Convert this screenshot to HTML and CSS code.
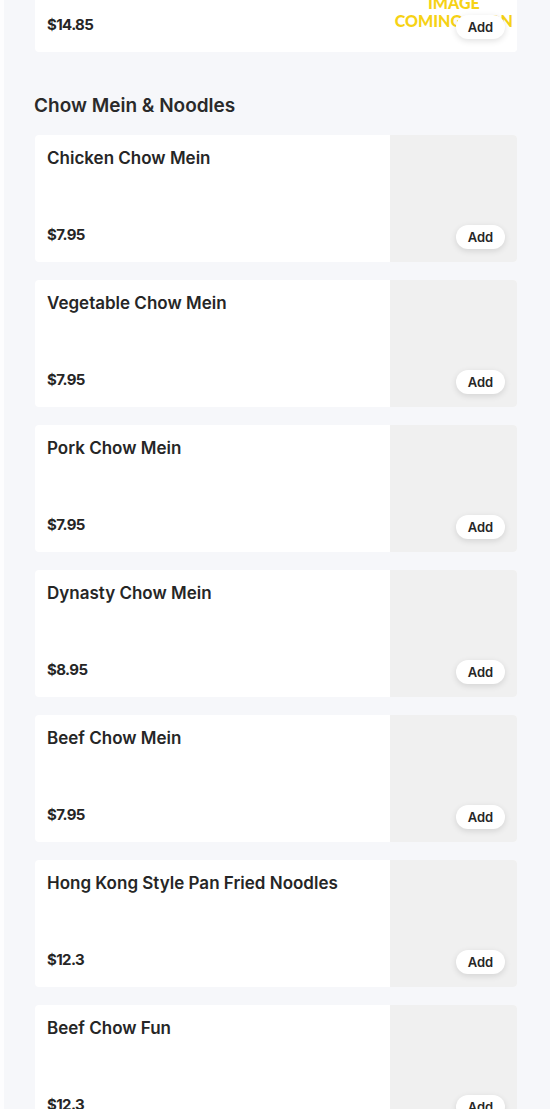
FILE: index.html
```html
<!DOCTYPE html>
<html lang="en">
<head>
    <meta charset="UTF-8">
    <meta name="viewport" content="width=device-width, initial-scale=1.0">
    <title>Menu</title>
    <link rel="stylesheet" href="styles.css">
</head>
<body>
    <div class="menu">
        <div class="item-list">
            <div class="item">
                <div class="item-info">
                    <div class="item-name">Combination Plate</div>
                    <div class="item-price">$14.85</div>
                </div>
                <div class="item-thumb placeholder">
                    <div class="soon">IMAGE<br>COMING SOON</div>
                    <button class="add-btn">Add</button>
                </div>
            </div>
        </div>

        <h2 class="section-title">Chow Mein &amp; Noodles</h2>
        <div class="item-list">
            <div class="item">
                <div class="item-info">
                    <div class="item-name">Chicken Chow Mein</div>
                    <div class="item-price">$7.95</div>
                </div>
                <div class="item-thumb"><button class="add-btn">Add</button></div>
            </div>
            <div class="item">
                <div class="item-info">
                    <div class="item-name">Vegetable Chow Mein</div>
                    <div class="item-price">$7.95</div>
                </div>
                <div class="item-thumb"><button class="add-btn">Add</button></div>
            </div>
            <div class="item">
                <div class="item-info">
                    <div class="item-name">Pork Chow Mein</div>
                    <div class="item-price">$7.95</div>
                </div>
                <div class="item-thumb"><button class="add-btn">Add</button></div>
            </div>
            <div class="item">
                <div class="item-info">
                    <div class="item-name">Dynasty Chow Mein</div>
                    <div class="item-price">$8.95</div>
                </div>
                <div class="item-thumb"><button class="add-btn">Add</button></div>
            </div>
            <div class="item">
                <div class="item-info">
                    <div class="item-name">Beef Chow Mein</div>
                    <div class="item-price">$7.95</div>
                </div>
                <div class="item-thumb"><button class="add-btn">Add</button></div>
            </div>
            <div class="item">
                <div class="item-info">
                    <div class="item-name">Hong Kong Style Pan Fried Noodles</div>
                    <div class="item-price">$12.3</div>
                </div>
                <div class="item-thumb"><button class="add-btn">Add</button></div>
            </div>
            <div class="item">
                <div class="item-info">
                    <div class="item-name">Beef Chow Fun</div>
                    <div class="item-price">$12.3</div>
                </div>
                <div class="item-thumb"><button class="add-btn">Add</button></div>
            </div>
        </div>
    </div>
</body>
</html>
```

FILE: styles.css
```css
body {
    margin: 0;
    background-color: #fdfdfe;
    font-family: "Inter", "Noto Sans", Arial, sans-serif;
    color: #262626;
    overflow: hidden;
}
.menu {
    margin-left: 4px;
    margin-top: -75px;
    padding: 0 29px 40px 31px;
    background-color: #f6f7fa;
    min-height: 1300px;
}
.item-list {
    display: flex;
    flex-direction: column;
    gap: 18px;
}
.section-title {
    margin: 40px 0 15px -1px;
    font-size: 19px;
    line-height: 28px;
    font-weight: 600;
    color: #2a2a2a;
}
.item {
    display: flex;
    width: 482px;
    height: 127px;
    background-color: #fff;
    border-radius: 4px;
}
.item-info {
    flex: 1;
    display: flex;
    flex-direction: column;
    justify-content: space-between;
    padding: 11px 12px 16px 12px;
}
.item-name {
    font-size: 17px;
    line-height: 24px;
    font-weight: 600;
}
.item-price {
    font-size: 15px;
    line-height: 22px;
    font-weight: 700;
    letter-spacing: -0.6px;
}
.item-thumb {
    width: 127px;
    position: relative;
    background-color: #f0f0f0;
    border-radius: 0 4px 4px 0;
}
.item-thumb.placeholder {
    background-color: #fff;
}
.soon {
    position: absolute;
    right: 4px;
    bottom: 22px;
    text-align: center;
    color: #f6d215;
    font-family: "Lato", sans-serif;
    font-weight: 900;
    font-size: 16px;
    line-height: 18px;
}
.add-btn {
    position: absolute;
    right: 12px;
    bottom: 13px;
    width: 49px;
    height: 24px;
    border: none;
    border-radius: 12px;
    background-color: #fff;
    box-shadow: 0 2px 6px rgba(0, 0, 0, 0.12);
    font-family: "Inter", "Noto Sans", Arial, sans-serif;
    font-size: 13px;
    font-weight: 600;
    color: #262626;
    padding: 0;
}
```
